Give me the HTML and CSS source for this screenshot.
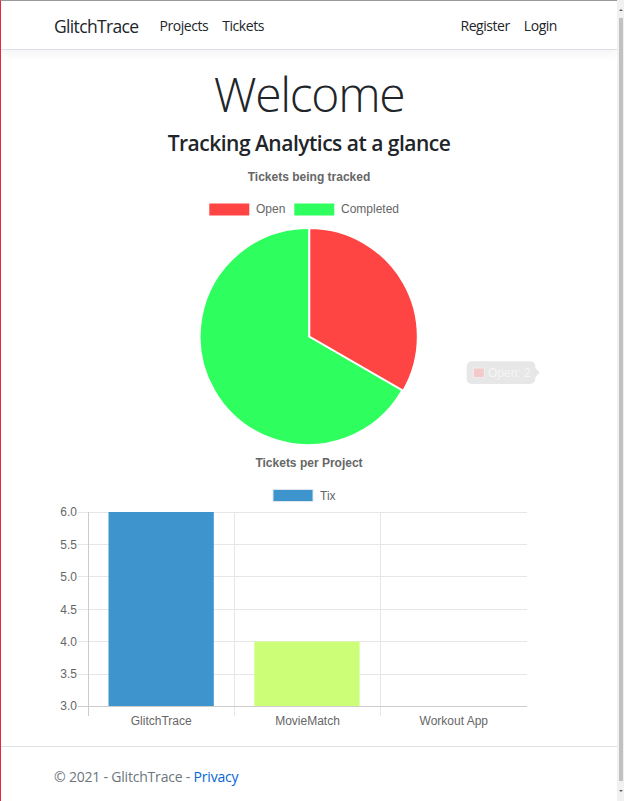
FILE: index.html
```html
<!DOCTYPE html>
<html lang="en">
<head>
<meta charset="utf-8">
<title>Home - GlitchTrace</title>
<link rel="stylesheet" href="styles.css">
</head>
<body>
<div class="window">
  <header class="navbar">
    <div class="container nav-inner">
      <a class="brand" href="#">GlitchTrace</a>
      <nav class="nav-main">
        <a class="nav-link" href="#">Projects</a>
        <a class="nav-link" href="#">Tickets</a>
      </nav>
      <nav class="nav-auth">
        <a class="nav-link" href="#">Register</a>
        <a class="nav-link" href="#">Login</a>
      </nav>
    </div>
  </header>

  <main class="container main">
    <h1 class="welcome">Welcome</h1>
    <h4 class="subtitle">Tracking Analytics at a glance</h4>

    <svg class="chart" width="510" height="290" viewBox="54 160 510 290" xmlns="http://www.w3.org/2000/svg">
      <text class="chart-title" x="309" y="180.5" text-anchor="middle">Tickets being tracked</text>
      <rect x="209.3" y="203.5" width="40" height="12" fill="#ff4444"/>
      <text class="chart-label" x="256" y="213.3">Open</text>
      <rect x="294.3" y="203.5" width="40" height="12" fill="#2eff5f"/>
      <text class="chart-label" x="341" y="213.3">Completed</text>
      <path d="M309.3 336.5 L402.4 390.25 A108.5 108.5 0 1 1 309.3 228 Z" fill="#2eff5f" stroke="#ffffff" stroke-width="2"/>
      <path d="M309.3 336.5 L309.3 228 A108.5 108.5 0 0 1 403.3 390.75 Z" fill="#ff4444" stroke="#ffffff" stroke-width="2"/>
      <g class="tooltip">
        <rect x="466.7" y="361.3" width="68.6" height="22.7" rx="5" fill="#e7e7e7"/>
        <path d="M535 367.5 L539.5 372.5 L535 377.5 Z" fill="#e7e7e7"/>
        <rect x="473.3" y="368" width="11" height="9.7" fill="#f3c9c9" stroke="#efefef" stroke-width="1"/>
        <text x="488" y="377" class="tip-text">Open: 2</text>
      </g>
    </svg>

    <svg class="chart" width="510" height="290" viewBox="54 450 510 290" xmlns="http://www.w3.org/2000/svg">
      <text class="chart-title" x="309" y="467" text-anchor="middle">Tickets per Project</text>
      <rect x="273" y="489.5" width="40" height="12" fill="#3e95cd" stroke="#dfe6ee" stroke-width="1"/>
      <text class="chart-label" x="320" y="499.5">Tix</text>

      <g class="grid" shape-rendering="crispEdges">
        <line x1="78" y1="512" x2="527" y2="512"/>
        <line x1="78" y1="544.4" x2="527" y2="544.4"/>
        <line x1="78" y1="576.8" x2="527" y2="576.8"/>
        <line x1="78" y1="609.2" x2="527" y2="609.2"/>
        <line x1="78" y1="641.6" x2="527" y2="641.6"/>
        <line x1="78" y1="674" x2="527" y2="674"/>
        <line x1="234.3" y1="512" x2="234.3" y2="716"/>
        <line x1="380.7" y1="512" x2="380.7" y2="716"/>
      </g>

      <rect x="108.5" y="512" width="105.3" height="194" fill="#3e95cd"/>
      <rect x="254.3" y="641.6" width="105.3" height="64.4" fill="#ccff77"/>

      <g class="axis" shape-rendering="crispEdges">
        <line x1="78" y1="706" x2="527" y2="706"/>
        <line x1="88" y1="512" x2="88" y2="716"/>
      </g>

      <g class="chart-label" text-anchor="end">
        <text x="77" y="516.3">6.0</text>
        <text x="77" y="548.7">5.5</text>
        <text x="77" y="581.1">5.0</text>
        <text x="77" y="613.5">4.5</text>
        <text x="77" y="645.9">4.0</text>
        <text x="77" y="678.3">3.5</text>
        <text x="77" y="710.3">3.0</text>
      </g>
      <g class="chart-label" text-anchor="middle">
        <text x="161.2" y="724.5">GlitchTrace</text>
        <text x="307.5" y="724.5">MovieMatch</text>
        <text x="453.8" y="724.5">Workout App</text>
      </g>
    </svg>
  </main>

  <footer class="footer">
    <div class="container">© 2021 - GlitchTrace - <a href="#" class="privacy">Privacy</a></div>
  </footer>
</div>
<div class="scrollbar">
  <span class="arrow-up"></span>
  <span class="thumb"></span>
  <span class="arrow-down"></span>
</div>
</body>
</html>
```

FILE: styles.css
```css
html {
  overflow: hidden;
  font-size: 14px;
}

body {
  margin: 0;
  background: #ffffff;
  font-family: "Open Sans", "Noto Sans", sans-serif;
  color: #212529;
}

a {
  text-decoration: none;
}

.window {
  width: 616px;
  height: 800px;
  border-top: 1px solid #9a9a9a;
  border-left: 1px solid #e6283c;
  overflow: hidden;
}

.container {
  width: 510px;
  margin: 0 auto;
}

.navbar {
  height: 48px;
  border-bottom: 1px solid #dfdfe8;
  box-shadow: 0 4px 10px rgba(0, 0, 0, 0.05);
  display: flex;
}

.nav-inner {
  display: flex;
  align-items: center;
}

.brand {
  color: #212529;
  font-size: 17.5px;
  line-height: 26px;
  padding-top: 2px;
  margin-right: 21px;
  letter-spacing: -0.65px;
}

.nav-main,
.nav-auth {
  display: flex;
}

.nav-main {
  gap: 14px;
}

.nav-auth {
  margin-left: auto;
  gap: 14px;
  margin-right: 7px;
}

.nav-link {
  color: #212529;
  font-size: 14px;
  line-height: 21px;
  letter-spacing: -0.45px;
}

.main {
  padding-top: 15px;
  text-align: center;
}

.welcome {
  margin: 0;
  height: 58px;
  font-size: 48px;
  line-height: 58px;
  font-weight: 300;
  letter-spacing: -1.3px;
}

.subtitle {
  margin: 5px 0 2px;
  height: 30px;
  font-size: 21px;
  line-height: 30px;
  font-weight: 600;
  letter-spacing: -0.5px;
}

.chart {
  display: block;
  overflow: visible;
}

.chart-title {
  font-family: "Liberation Sans", Arial, sans-serif;
  font-size: 12px;
  font-weight: bold;
  fill: #666666;
}

.chart-label {
  font-family: "Liberation Sans", Arial, sans-serif;
  font-size: 12px;
  fill: #666666;
}

.tip-text {
  font-family: "Liberation Sans", Arial, sans-serif;
  font-size: 12px;
  fill: #f5f5f5;
}

.grid line {
  stroke: #e6e6e6;
  stroke-width: 1;
}

.axis line {
  stroke: #cccccc;
  stroke-width: 1;
}

.footer {
  margin-top: 6px;
  border-top: 1px solid #dee2e6;
  height: 60px;
  line-height: 60px;
  font-size: 14px;
  color: #6c757d;
  white-space: nowrap;
  letter-spacing: -0.2px;
}

.privacy {
  color: #0366d6;
}

.scrollbar {
  position: fixed;
  top: 0;
  right: 0;
  width: 7px;
  height: 801px;
  background: #f1f1f1;
}

.thumb {
  position: absolute;
  left: 2px;
  width: 4px;
  top: 18px;
  bottom: 20px;
  background: #c1c1c1;
}

.arrow-up,
.arrow-down {
  position: absolute;
  left: 2px;
  width: 0;
  height: 0;
  border-left: 2px solid transparent;
  border-right: 2px solid transparent;
}

.arrow-up {
  top: 9px;
  border-bottom: 2px solid #606060;
}

.arrow-down {
  bottom: 9px;
  border-top: 2px solid #606060;
}
```
